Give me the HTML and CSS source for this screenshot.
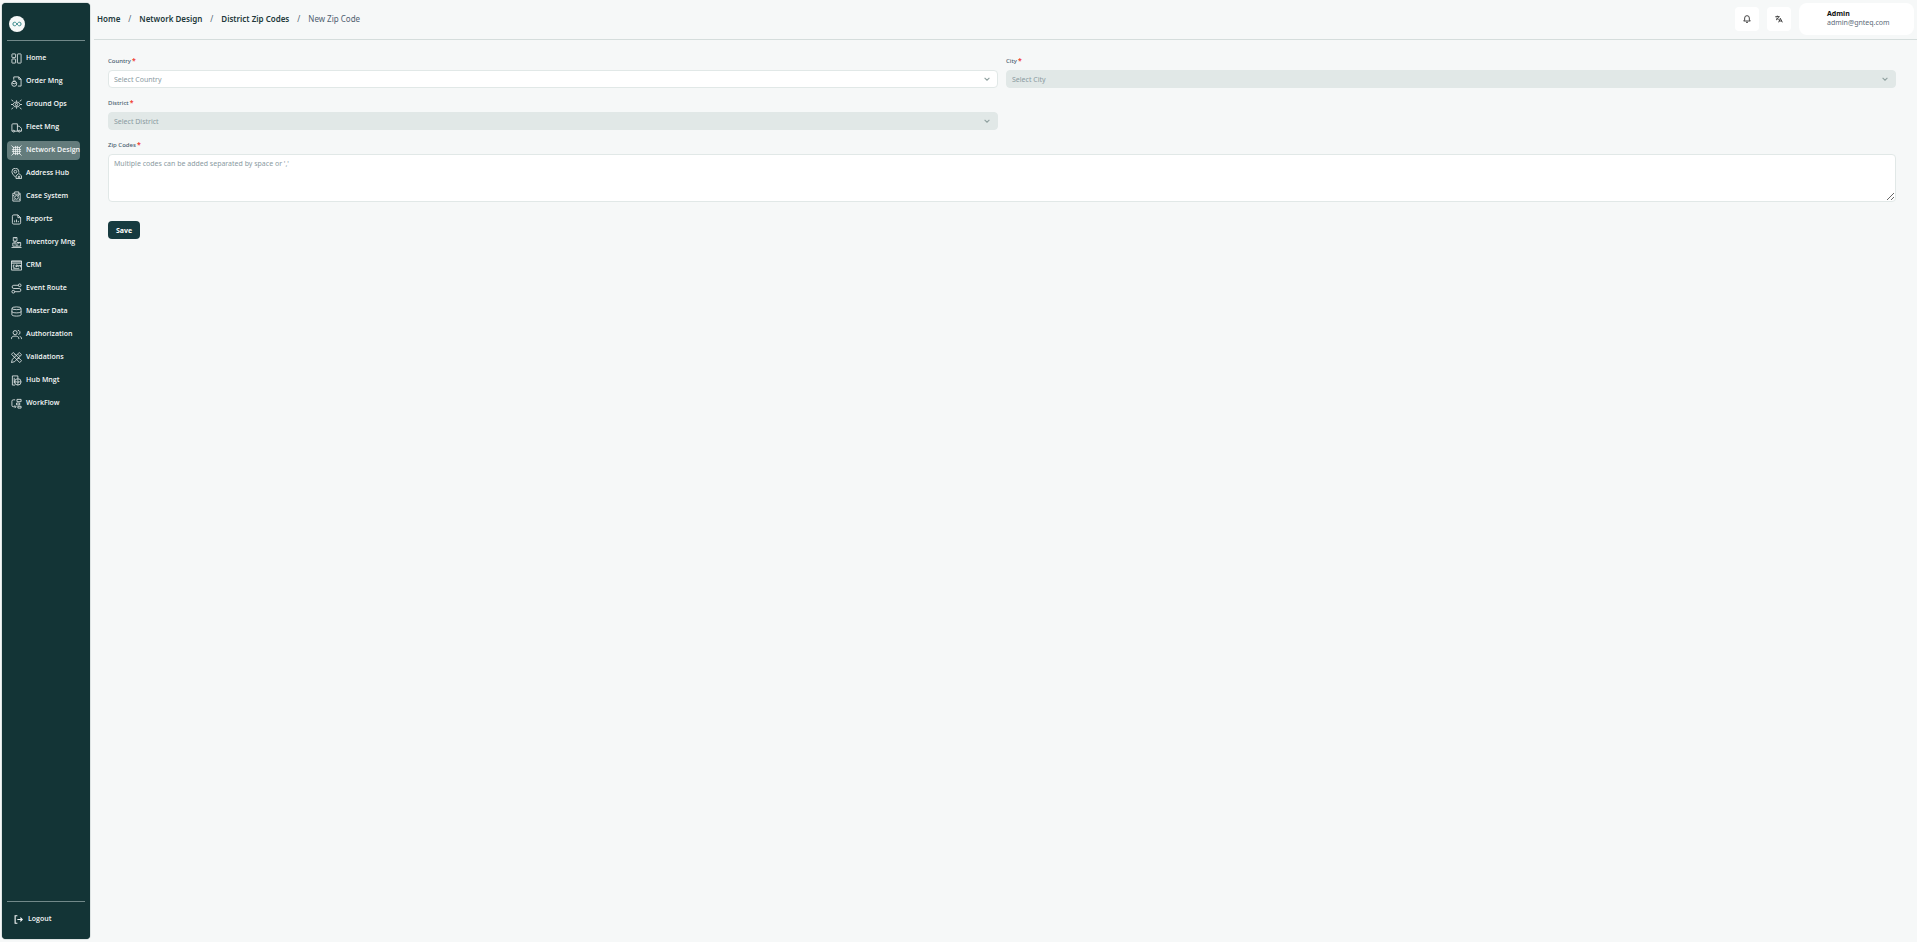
FILE: index.html
```html
<!DOCTYPE html>
<html lang="en">
<head>
<meta charset="UTF-8">
<meta name="viewport" content="width=device-width, initial-scale=1.0">
<title>New Zip Code</title>
<link rel="stylesheet" href="styles.css">
</head>
<body>
<aside class="sidebar">
    <a href="#" class="logo" aria-label="Dashboard">
        <svg viewBox="0 0 16 16"><path d="M8 8C7 6.600 6.400 6.200 5.700 6.200a1.800 1.800 0 0 0 0 3.600C6.400 9.800 7 9.400 8 8s1.600-1.800 2.300-1.800a1.800 1.800 0 0 1 0 3.600C9.600 9.800 9 9.400 8 8z"/></svg>
    </a>
    <nav class="menu">
        <a href="#" class="item">
            <svg class="icon" viewBox="0 0 24 24"><rect x="2" y="2" width="8" height="8" rx="1"/><rect x="2" y="13" width="8" height="9" rx="1"/><rect x="14" y="2" width="8" height="20" rx="1"/></svg>
            <span>Home</span>
        </a>
        <a href="#" class="item">
            <svg class="icon" viewBox="0 0 24 24"><path d="M6 8V2h11l5 5v15h-7M17 2v5h5"/><circle cx="7" cy="17" r="5.500"/><path d="M2 15l5 2 5-2M4 11h6"/></svg>
            <span>Order Mng</span>
        </a>
        <a href="#" class="item">
            <svg class="icon" viewBox="0 0 24 24"><path d="M4 12l4-5h8l4 5-4 5H8z"/><circle cx="12" cy="12" r="2.500"/><path d="M1 2l4 3M23 2l-4 3M1 22l4-3M23 22l-4-3M0 12h4M20 12h4M12 3v3M12 18v3"/></svg>
            <span>Ground Ops</span>
        </a>
        <a href="#" class="item">
            <svg class="icon" viewBox="0 0 24 24"><path d="M4 20H2V6a2 2 0 0 1 2-2h10v16H8M14 9h4l5 5v6h-3M14 20h2"/><circle cx="6" cy="20" r="2"/><circle cx="18" cy="20" r="2"/></svg>
            <span>Fleet Mng</span>
        </a>
        <a href="#" class="item active">
            <svg class="icon" viewBox="0 0 24 24"><rect x="5" y="5" width="14" height="14"/><path d="M1 1l4 4M23 1l-4 4M1 23l4-4M23 23l-4-4M10 2v20M14 2v20M2 10h20M2 14h20"/></svg>
            <span>Network Design</span>
        </a>
        <a href="#" class="item">
            <svg class="icon" viewBox="0 0 24 24"><path d="M10 20C5 15 2 12 2 8a7.500 7.500 0 0 1 15 0v2"/><circle cx="9.500" cy="8" r="3"/><path d="M11 17l6-5 6 5v6H11zM16 22v-4h3v4"/></svg>
            <span>Address Hub</span>
        </a>
        <a href="#" class="item">
            <svg class="icon" viewBox="0 0 24 24"><path d="M7 5H4v17h16V5h-2M8 2h9v5H8z"/><circle cx="12" cy="14" r="4"/><path d="M15 11l4-4M7 19l2-2M4 10h3M17 18h3"/></svg>
            <span>Case System</span>
        </a>
        <a href="#" class="item">
            <svg class="icon" viewBox="0 0 24 24"><path d="M15 2H6a3 3 0 0 0-3 3v14a3 3 0 0 0 3 3h12a3 3 0 0 0 3-3V8zM15 2v6h6M8 18v-4M12 18v-6M16 18v-3"/></svg>
            <span>Reports</span>
        </a>
        <a href="#" class="item">
            <svg class="icon" viewBox="0 0 24 24"><path d="M5 1h8v8H5zM13 12h8v8h-8zM9 9v8M4 13h5M4 13v7h9M1 23h22M9 1v3M17 12v3"/></svg>
            <span>Inventory Mng</span>
        </a>
        <a href="#" class="item">
            <svg class="icon" viewBox="0 0 24 24"><path d="M1 2h22v20H1zM1 7h22M1 4h22M8 11H5v5h3M11 16v-5h3v3h-3M17 16v-5l2 2 2-2v5M5 19h13"/></svg>
            <span>CRM</span>
        </a>
        <a href="#" class="item">
            <svg class="icon" viewBox="0 0 24 24"><circle cx="19" cy="5" r="3"/><circle cx="5" cy="19" r="3"/><path d="M16 5H6a3.500 3.500 0 0 0 0 7h12a3.500 3.500 0 0 1 0 7H8"/></svg>
            <span>Event Route</span>
        </a>
        <a href="#" class="item">
            <svg class="icon" viewBox="0 0 24 24"><ellipse cx="12" cy="5" rx="10" ry="3"/><path d="M2 5v14c0 4 20 4 20 0V5M2 12c0 4 20 4 20 0"/></svg>
            <span>Master Data</span>
        </a>
        <a href="#" class="item">
            <svg class="icon" viewBox="0 0 24 24"><circle cx="9" cy="8" r="4.500"/><path d="M1 22v-2c0-6 16-6 16 0v2M15 3c6 0 6 9 1 9M19 16c3 1 4 3 4 6"/></svg>
            <span>Authorization</span>
        </a>
        <a href="#" class="item">
            <svg class="icon" viewBox="0 0 24 24"><path d="M1 5l4-4 18 18-4 4zM23 6l-5-5L3 16l-2 7 7-2zM15 5l4 4M7 7l2-2M15 15l2-2"/></svg>
            <span>Validations</span>
        </a>
        <a href="#" class="item">
            <svg class="icon" viewBox="0 0 24 24"><path d="M9 22H3V2h12v5M7 6v12"/><circle cx="15" cy="15" r="7"/><circle cx="15" cy="15" r="2"/><path d="M15 8v4M15 18v4M8 15h4M18 15h4"/></svg>
            <span>Hub Mngt</span>
        </a>
        <a href="#" class="item">
            <svg class="icon" viewBox="0 0 24 24"><path d="M9 4H5a3 3 0 0 0-3 3v9a3 3 0 0 0 3 3h5M8 16l3 3-3 3M13 3h9v5h-9zM12 11h7v4h-7zM15 18h7v4h-7z"/></svg>
            <span>WorkFlow</span>
        </a>
    </nav>
    <div class="sidebar-footer">
        <a href="#" class="logout">
            <svg class="logout-icon" viewBox="0 0 24 24"><path d="M9 2H3v20h6M9 12h13M17 7l5 5-5 5"/></svg>
            <span>Logout</span>
        </a>
    </div>
</aside>
<div class="page">
    <header class="header">
        <nav class="breadcrumb">
            <a href="#">Home</a>
            <span>/</span>
            <a href="#">Network Design</a>
            <span>/</span>
            <a href="#">District Zip Codes</a>
            <span>/</span>
            <span class="current">New Zip Code</span>
        </nav>
        <div class="tools">
            <button type="button" class="tool" aria-label="Notifications">
                <svg viewBox="0 0 24 24"><path d="M2 18h20l-3-3V9a7 7 0 0 0-14 0v6zM9 22h6"/></svg>
            </button>
            <button type="button" class="tool" aria-label="Language">
                <svg viewBox="0 0 24 24"><path d="M1 5h13M7 2v3M3 15C7 13 10 9 11 5M4 8c1 3 4 5 7 6M11 22l5-12 6 12M13 18h7"/></svg>
            </button>
            <div class="user">
                <div class="user-name">Admin</div>
                <div class="user-mail">admin@gnteq.com</div>
            </div>
        </div>
    </header>
    <main class="content">
        <form class="form">
            <div class="field">
                <label for="country">Country<span class="required">*</span></label>
                <div class="select">
                    <select id="country"><option>Select Country</option></select>
                    <svg viewBox="0 0 10 10"><path d="M1 3l4 4 4-4"/></svg>
                </div>
            </div>
            <div class="field">
                <label for="city">City<span class="required">*</span></label>
                <div class="select">
                    <select id="city" disabled><option>Select City</option></select>
                    <svg viewBox="0 0 10 10"><path d="M1 3l4 4 4-4"/></svg>
                </div>
            </div>
            <div class="field">
                <label for="district">District<span class="required">*</span></label>
                <div class="select">
                    <select id="district" disabled><option>Select District</option></select>
                    <svg viewBox="0 0 10 10"><path d="M1 3l4 4 4-4"/></svg>
                </div>
            </div>
            <div class="field wide">
                <label for="codes">Zip Codes<span class="required">*</span></label>
                <textarea id="codes" placeholder="Multiple codes can be added separated by space or ','"></textarea>
            </div>
            <button type="submit" class="save">Save</button>
        </form>
    </main>
</div>
</body>
</html>
```

FILE: styles.css
```css
* {
    box-sizing: border-box;
}
body {
    margin: 0;
    min-height: 100vh;
    display: flex;
    background-color: #f6f8f8;
    font-family: 'Noto Sans', sans-serif;
    font-size: 7px;
}
a {
    color: inherit;
    text-decoration: none;
}
button, select, textarea {
    font-family: inherit;
    font-size: 7px;
}
svg {
    display: block;
    fill: none;
    stroke: currentColor;
}

/* sidebar */
.sidebar {
    width: 88px;
    flex-shrink: 0;
    margin: 3px 2px;
    padding: 13px 5px 15px;
    display: flex;
    flex-direction: column;
    background-color: #133436;
    border-radius: 4px;
    box-shadow: 0 0 1px #133436;
    color: #f6f8f8;
    font-family: 'Open Sans', 'Noto Sans', sans-serif;
    font-weight: 600;
}
.logo {
    width: 16px;
    height: 16px;
    margin-left: 2px;
    border-radius: 50%;
    background-color: #f6f8f8;
    color: #35888a;
}
.menu {
    display: flex;
    flex-direction: column;
    gap: 4px;
    margin-top: 8px;
    padding: 8px 5px 0 0;
    border-top: 1px solid #72898a;
}
.item {
    height: 19px;
    display: flex;
    align-items: center;
    gap: 4px;
    padding-left: 4px;
    border-radius: 4px;
    line-height: 10px;
    white-space: nowrap;
}
.item span {
    padding-bottom: 1px;
}
.item.active {
    background-color: #647c7c;
}
.icon {
    width: 11px;
    height: 11px;
    flex-shrink: 0;
    stroke-width: 1.7;
}
.sidebar-footer {
    margin-top: auto;
    padding-top: 12px;
    border-top: 1px solid #72898a;
}
.logout {
    display: flex;
    align-items: center;
    gap: 5px;
    padding-left: 7px;
    line-height: 10px;
}
.logout-icon {
    width: 9px;
    height: 9px;
    stroke-width: 3;
}

/* header */
.page {
    flex: 1;
    min-width: 0;
    padding-left: 2px;
}
.header {
    height: 40px;
    display: flex;
    justify-content: space-between;
    align-items: center;
    padding: 0 3px 1px 3px;
    border-bottom: 1px solid #d5dddc;
}
.breadcrumb {
    display: flex;
    gap: 8px;
    font-size: 8px;
    line-height: 12px;
    color: #4f6070;
}
.breadcrumb a {
    color: #22393b;
    font-weight: 600;
}
.tools {
    display: flex;
    align-items: center;
    gap: 8px;
}
.tool {
    width: 24px;
    height: 24px;
    display: flex;
    justify-content: center;
    align-items: center;
    padding: 0;
    border: none;
    border-radius: 4px;
    background-color: #fff;
    color: #222;
}
.tool svg {
    width: 8px;
    height: 8px;
    stroke-width: 2.5;
}
.user {
    width: 115px;
    height: 32px;
    padding: 6px 0 0 28px;
    border-radius: 8px;
    background-color: #fff;
    line-height: 9px;
}
.user-name {
    color: #111;
    font-weight: 700;
}
.user-mail {
    color: #5d6b78;
}

/* form */
.content {
    padding: 16px 21px 0 14px;
}
.form {
    display: grid;
    grid-template-columns: 1fr 1fr;
    gap: 10px 8px;
}
.field label {
    display: block;
    height: 14px;
    font-size: 6px;
    font-weight: 500;
    line-height: 10px;
    color: #4a6070;
}
.required {
    margin-left: 1px;
    font-size: 7px;
    font-weight: 700;
    line-height: 8px;
    color: #f04438;
}
.wide {
    grid-column: 1 / -1;
}
.select {
    position: relative;
}
.select select {
    display: block;
    width: 100%;
    height: 18px;
    padding: 0 5px;
    appearance: none;
    border: 1px solid #e1e8e7;
    border-radius: 4px;
    background-color: #fff;
    color: #8a9a9f;
    opacity: 1;
}
.select select:disabled {
    background-color: #e1e8e7;
}
.select svg {
    position: absolute;
    right: 8px;
    top: 6px;
    width: 6px;
    height: 6px;
    color: #8fa09f;
    stroke-width: 1.8;
    pointer-events: none;
}
textarea {
    display: block;
    width: 100%;
    height: 48px;
    padding: 4px 5px;
    border: 1px solid #e1e8e7;
    border-radius: 4px;
    background-color: #fff;
    line-height: 10px;
    resize: vertical;
}
textarea::placeholder {
    color: #8a9a9f;
}
.save {
    justify-self: start;
    width: 32px;
    height: 18px;
    margin-top: 9px;
    padding: 0;
    border: none;
    border-radius: 4px;
    background-color: #173b40;
    color: #fff;
    font-weight: 700;
}
```
